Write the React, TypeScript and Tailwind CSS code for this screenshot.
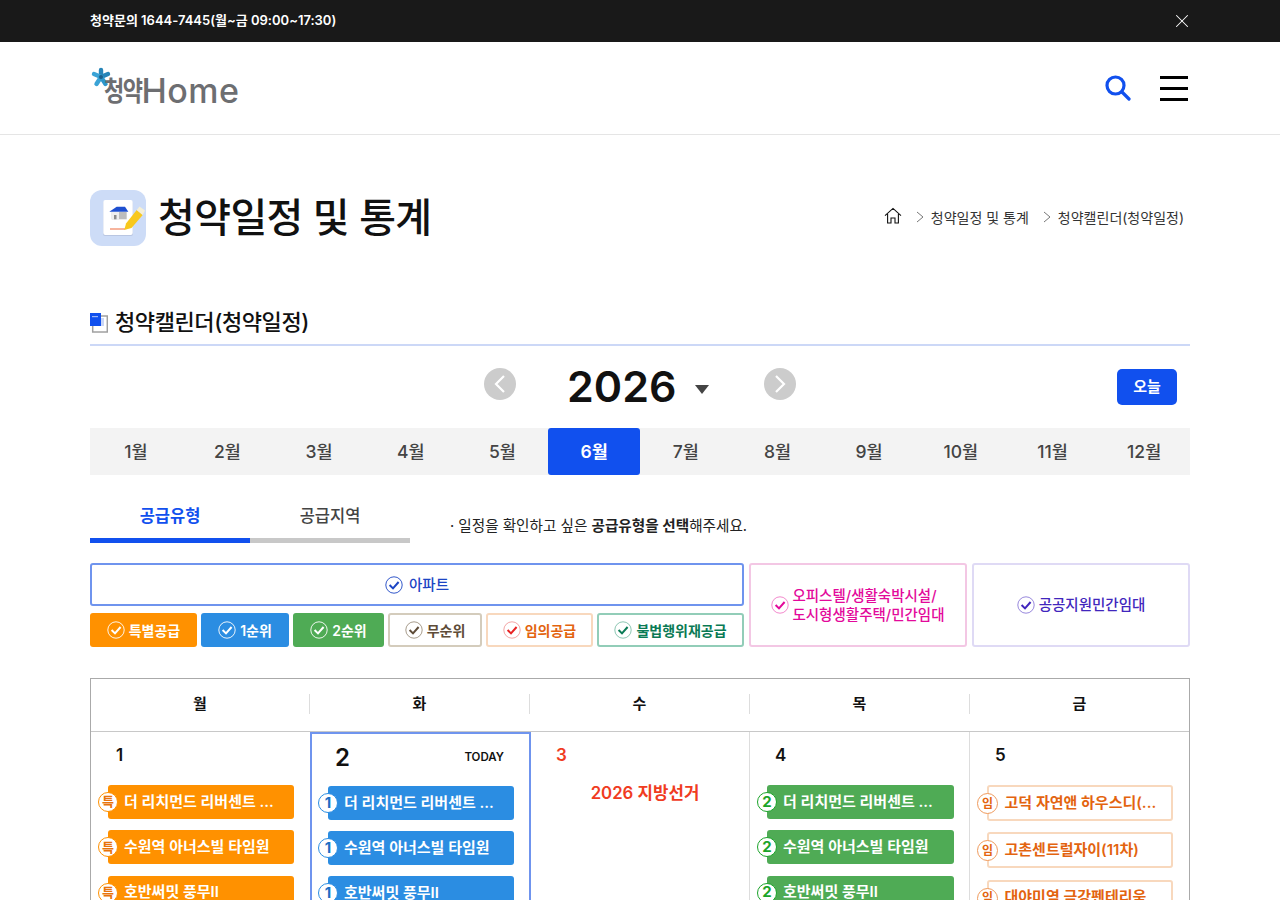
import React from 'react';
import { X } from 'lucide-react';

const months = ['1월', '2월', '3월', '4월', '5월', '6월', '7월', '8월', '9월', '10월', '11월', '12월'];
const weekdays = ['월', '화', '수', '목', '금'];
const names = ['더 리치먼드 리버센트 ...', '수원역 아너스빌 타임원', '호반써밋 풍무II'];

const CheckMark = ({ ring, tick, size = 18 }: { ring: string; tick: string; size?: number }) => (
  <svg width={size} height={size} viewBox="0 0 18 18" fill="none" className="shrink-0">
    <circle cx="9" cy="9" r="8.2" stroke={ring} strokeWidth="0.9" />
    <path d="M4.6 9 L8 12.4 L13.6 6" stroke={tick} strokeWidth="2" />
  </svg>
);

const FilterChip = ({ label, className, ring, tick }: { label: string; className: string; ring: string; tick: string }) => (
  <button className={`h-[34px] rounded-[3px] flex items-center justify-center gap-[4px] text-[14px] font-semibold ${className}`}>
    <CheckMark ring={ring} tick={tick} />
    <span>{label}</span>
  </button>
);

const Item = ({ badge, label, bar, badgeClass }: { badge: string; label: string; bar: string; badgeClass: string }) => (
  <div className={`relative h-[34px] rounded-[3px] pl-[16px] flex items-center text-[15px] font-semibold text-white ${bar}`}>
    <span className={`absolute left-[-10px] top-[7px] w-[20px] h-[20px] rounded-full bg-white border flex items-center justify-center font-bold ${badgeClass}`}>{badge}</span>
    {label}
  </div>
);

const OutlineItem = ({ label }: { label: string }) => (
  <div className="relative w-[186px] h-[36px] rounded-[3px] border-2 border-[#f8d8bd] bg-white pl-[15.5px] flex items-center text-[15px] font-semibold text-[#e3640f]">
    <span className="absolute left-[-12px] top-[6px] w-[21px] h-[21px] rounded-full bg-white border border-[#ef9a5c] flex items-center justify-center text-[12px] font-semibold text-[#e3640f]">임</span>
    {label}
  </div>
);

const App: React.FC = () => {
  return (
    <div className="h-screen overflow-hidden bg-white text-[#111] font-[Inter,'Noto_Sans_CJK_KR',sans-serif]">
      {/* top notice */}
      <div className="h-[42px] bg-[#191919] flex items-center justify-between pl-[90px] pr-[87px] text-white">
        <p className="text-[13px] font-semibold">청약문의 1644-7445(월~금 09:00~17:30)</p>
        <X size={22} strokeWidth={1.1} />
      </div>

      {/* header */}
      <header className="h-[93px] border-b border-[#e5e5e5] px-[90px] flex items-center justify-between">
        <div className="relative flex items-center h-[40px] pl-[14px]">
          <svg width="20" height="21" viewBox="0 0 20 21" className="absolute left-[1px] top-[-1px]" strokeWidth="4.4" strokeLinecap="round">
            <path d="M10 10 L10 3" stroke="#2785b8" />
            <path d="M10 10 L3 7" stroke="#3aa3d6" />
            <path d="M10 10 L17 7" stroke="#2785b8" />
            <path d="M10 10 L5.5 17" stroke="#3aa3d6" />
            <path d="M10 10 L14.5 17" stroke="#2f97cb" />
            <circle cx="10" cy="10" r="2" fill="#1d5f8a" stroke="none" />
          </svg>
          <span className="inline-block scale-y-125 text-[22px] font-semibold text-[#6d6e71] tracking-[-1.5px] leading-none mt-[6px]">청약</span>
          <span className="text-[34px] font-medium text-[#6d6e71] tracking-[0.5px] leading-none mt-[6px]">Home</span>
        </div>
        <div className="flex items-center gap-[29px] pr-[2px]">
          <svg width="26" height="26" viewBox="0 0 26 26" fill="none" stroke="#1150ee" strokeWidth="3.2">
            <circle cx="10.5" cy="10.5" r="8.5" />
            <path d="M17 17 L24 24" strokeLinecap="round" />
          </svg>
          <div className="w-[28px] flex flex-col gap-[8px]">
            <div className="h-[3px] bg-black" />
            <div className="h-[3px] bg-black" />
            <div className="h-[3px] bg-black" />
          </div>
        </div>
      </header>

      <main className="px-[90px]">
        {/* page title */}
        <div className="pt-[55px] flex items-center justify-between">
          <div className="flex items-center gap-[12px]">
            <div className="w-[56px] h-[56px] rounded-[12px] bg-[#cddcf7]">
              <svg width="56" height="56" viewBox="0 0 56 56" fill="none">
                <rect x="13" y="11" width="30" height="35" rx="2" fill="#b9c6e2" />
                <rect x="13.3" y="10" width="29.4" height="35" rx="2" fill="#ffffff" />
                <path d="M21.7 22 L36.7 22 L36.7 29.3 L21.7 29.3 Z" fill="#bdbdbd" />
                <path d="M21.7 22 L29 22 L29 29.3 L21.7 29.3 Z" fill="#eeeeee" />
                <rect x="24" y="25" width="2.5" height="4.3" fill="#8c8c8c" />
                <path d="M19.3 21.7 L26.7 16.7 L35 16.7 L38.3 21.7 Z" fill="#1e4fd0" />
                <path d="M20 39 L35 39" stroke="#ef6a3c" strokeWidth="1" />
                <path d="M34.3 40 L36 33.5 L46.7 20 L52.7 25 L41.5 38 Z" fill="#f8c81c" />
                <path d="M46.7 20 L49.5 16.5 L55 20.5 L52.7 25 Z" fill="#f5efd6" />
              </svg>
            </div>
            <h1 className="text-[40px] font-medium tracking-[-0.6px] leading-none">청약일정 및 통계</h1>
          </div>
          <nav className="flex items-center text-[14px] text-[#333] pr-[6px] mb-[2px]">
            <svg width="18" height="18" viewBox="0 0 18 18" fill="none" stroke="#111" strokeWidth="1.1" className="mr-[14px] mb-[3px]">
              <path d="M1 8.6 L9 1.4 L17 8.6 M3.6 7 L3.6 16 L7 16 L7 11 L11 11 L11 16 L14.4 16 L14.4 7" />
            </svg>
            <svg width="8" height="12" viewBox="0 0 8 12" fill="none" stroke="#777" className="mr-[7px]"><path d="M1 1 L7 6 L1 11" /></svg>
            <span>청약일정 및 통계</span>
            <svg width="8" height="12" viewBox="0 0 8 12" fill="none" stroke="#777" className="ml-[14px] mr-[7px]"><path d="M1 1 L7 6 L1 11" /></svg>
            <span>청약캘린더(청약일정)</span>
          </nav>
        </div>

        {/* section heading */}
        <div className="mt-[61px] h-[39px] border-b-2 border-[#ccd8f7] flex items-start gap-[7px]">
          <svg width="18" height="20" viewBox="0 0 18 20" className="mt-[6px]">
            <rect x="2.7" y="3" width="14.6" height="16" fill="#fff" stroke="#a0a0a0" strokeWidth="1.5" />
            <rect x="11" y="5" width="3" height="8" fill="#c9d6f7" />
            <rect x="0" y="0" width="11" height="13" fill="#1150ee" />
            <rect x="2" y="3" width="6" height="1.2" fill="#9db7f7" />
          </svg>
          <h2 className="text-[22px] font-medium tracking-[-0.4px] leading-[30px]">청약캘린더(청약일정)</h2>
        </div>

        {/* year */}
        <div className="h-[82px] flex items-center justify-between pl-[394px] pr-[13px]">
          <div className="flex items-center">
            <span className="w-[32px] h-[32px] mb-[6px] rounded-full bg-[#cccccc] flex items-center justify-center">
              <svg width="12" height="18" viewBox="0 0 12 18" fill="none" stroke="#fff" strokeWidth="2.2"><path d="M10 1 L2 9 L10 17" /></svg>
            </span>
            <span className="ml-[51px] mb-[2px] text-[43px] font-semibold leading-none">2026</span>
            <span className="ml-[19px] mt-[4px] w-0 h-0 border-x-[7px] border-x-transparent border-t-[9px] border-t-[#444]" />
            <span className="ml-[55px] mb-[6px] w-[32px] h-[32px] rounded-full bg-[#cccccc] flex items-center justify-center">
              <svg width="12" height="18" viewBox="0 0 12 18" fill="none" stroke="#fff" strokeWidth="2.2"><path d="M2 1 L10 9 L2 17" /></svg>
            </span>
          </div>
          <button className="w-[60px] h-[36px] rounded-[5px] bg-[#1150ee] text-white text-[15px] font-semibold">오늘</button>
        </div>

        {/* months */}
        <div className="h-[47px] bg-[#f3f3f3] grid grid-cols-12">
          {months.map((m) => (
            <div
              key={m}
              className={m === '6월'
                ? 'flex items-center justify-center pt-[1px] rounded-[3px] bg-[#1150ee] text-white text-[17.5px] font-semibold'
                : 'flex items-center justify-center pt-[1px] text-[17.5px] font-medium text-[#444]'}
            >
              {m}
            </div>
          ))}
        </div>

        {/* tabs */}
        <div className="mt-[23px] flex items-end">
          <div className="w-[160px] h-[45px] border-b-[5px] border-[#1150ee] text-center text-[16.5px] font-semibold text-[#1150ee] leading-[36px]">공급유형</div>
          <div className="w-[160px] h-[45px] border-b-[5px] border-[#c8c8c8] text-center text-[16.5px] font-medium text-[#444] leading-[36px]">공급지역</div>
          <p className="ml-[40px] mb-[5px] text-[14.6px] text-[#222]">· 일정을 확인하고 싶은 <b className="font-semibold">공급유형을 선택</b>해주세요.</p>
        </div>

        {/* filters */}
        <div className="mt-[20px] flex gap-[5px] h-[84px]">
          <div className="w-[654px] flex flex-col gap-[7px]">
            <button className="h-[43px] rounded-[3px] border-2 border-[#6f94ee] flex items-center justify-center gap-[6px] text-[14.5px] font-medium text-[#1c45c4]">
              <CheckMark ring="#1c45c4" tick="#1c45c4" />
              <span>아파트</span>
            </button>
            <div className="flex gap-[4px]">
              <FilterChip label="특별공급" className="w-[107px] bg-[#ff9100] text-white" ring="#ffffff" tick="#ffffff" />
              <FilterChip label="1순위" className="w-[88px] bg-[#2b8de2] text-white" ring="#ffffff" tick="#ffffff" />
              <FilterChip label="2순위" className="w-[91px] bg-[#4fab55] text-white" ring="#ffffff" tick="#ffffff" />
              <FilterChip label="무순위" className="w-[94px] border-2 border-[#d4ccbc] text-[#5e4c38]" ring="#9d917f" tick="#5e4c38" />
              <FilterChip label="임의공급" className="w-[107px] border-2 border-[#f8d8bd] text-[#e3640f]" ring="#f29a9a" tick="#e82323" />
              <FilterChip label="불법행위재공급" className="w-[147px] border-2 border-[#92cdb8] text-[#0a7a55]" ring="#7fbfa9" tick="#0a7a55" />
            </div>
          </div>
          <button className="w-[218px] rounded-[3px] border-2 border-[#f3c7e4] flex items-center justify-center gap-[3px] text-left text-[14.5px] font-medium leading-[19px] text-[#e3099b]">
            <CheckMark ring="#f07cc6" tick="#e3099b" />
            <span>오피스텔/생활숙박시설/<br />도시형생활주택/민간임대</span>
          </button>
          <button className="w-[218px] rounded-[3px] border-2 border-[#dfdaf5] flex items-center justify-center gap-[4px] text-[14.5px] font-medium text-[#4126bd]">
            <CheckMark ring="#8c7bd8" tick="#4126bd" />
            <span>공공지원민간임대</span>
          </button>
        </div>

        {/* calendar */}
        <div className="mt-[31px] border border-b-0 border-[#aaaaaa]">
          <div className="h-[53px] pb-[2px] grid grid-cols-[218px_220px_220px_220px_220px] border-b border-[#c8c8c8]">
            {weekdays.map((d, i) => (
              <div key={d} className="flex items-center justify-center">
                <span className={`w-full h-[20px] flex items-center justify-center text-[15px] font-semibold ${i > 0 ? 'border-l border-[#dddddd]' : ''}`}>{d}</span>
              </div>
            ))}
          </div>
          <div className="grid grid-cols-[219px_221px_219px_220px_219px] h-[300px]">
            <div className="pl-[17px]">
              <p className="pl-[8px] pt-[11px] h-[53px] text-[17px] font-semibold">1</p>
              <div className="flex flex-col gap-[11.3px]">
                {names.map((n) => (
                  <Item key={n} badge="특" label={n} bar="w-[186px] bg-[#ff9100]" badgeClass="text-[13px] border-[#ff9100] text-[#e8740a]" />
                ))}
              </div>
            </div>
            <div className="border-2 border-[#6f94ee] pl-[16px]">
              <div className="pl-[7px] pr-[25px] pt-[6px] h-[52px] flex justify-between items-start">
                <span className="text-[24px] font-semibold">2</span>
                <span className="text-[11.5px] font-semibold mt-[9px]">TODAY</span>
              </div>
              <div className="flex flex-col gap-[11px]">
                {names.map((n) => (
                  <Item key={n} badge="1" label={n} bar="w-[186px] bg-[#2b8de2]" badgeClass="text-[15px] border-[#2b8de2] text-[#1c6fc4]" />
                ))}
              </div>
            </div>
            <div className="border-r border-[#dddddd]">
              <p className="pl-[25px] pt-[11px] h-[49px] text-[17px] font-semibold text-[#f03c1f]">3</p>
              <p className="pl-[10px] text-center text-[16.8px] font-semibold text-[#f03c1f]">2026 지방선거</p>
            </div>
            <div className="pl-[17px] border-r border-[#dddddd]">
              <p className="pl-[8px] pt-[11px] h-[53px] text-[17px] font-semibold">4</p>
              <div className="flex flex-col gap-[11.3px]">
                {names.map((n) => (
                  <Item key={n} badge="2" label={n} bar="w-[187px] bg-[#4fab55]" badgeClass="text-[15px] border-[#1ba42a] text-[#1ba42a]" />
                ))}
              </div>
            </div>
            <div className="pl-[17px]">
              <p className="pl-[8px] pt-[11px] h-[53px] text-[17px] font-semibold">5</p>
              <div className="flex flex-col gap-[11.3px]">
                <OutlineItem label="고덕 자연앤 하우스디(..." />
                <OutlineItem label="고촌센트럴자이(11차)" />
                <OutlineItem label="대야미역 금강펜테리움" />
              </div>
            </div>
          </div>
        </div>
      </main>
    </div>
  );
};

export default App;
